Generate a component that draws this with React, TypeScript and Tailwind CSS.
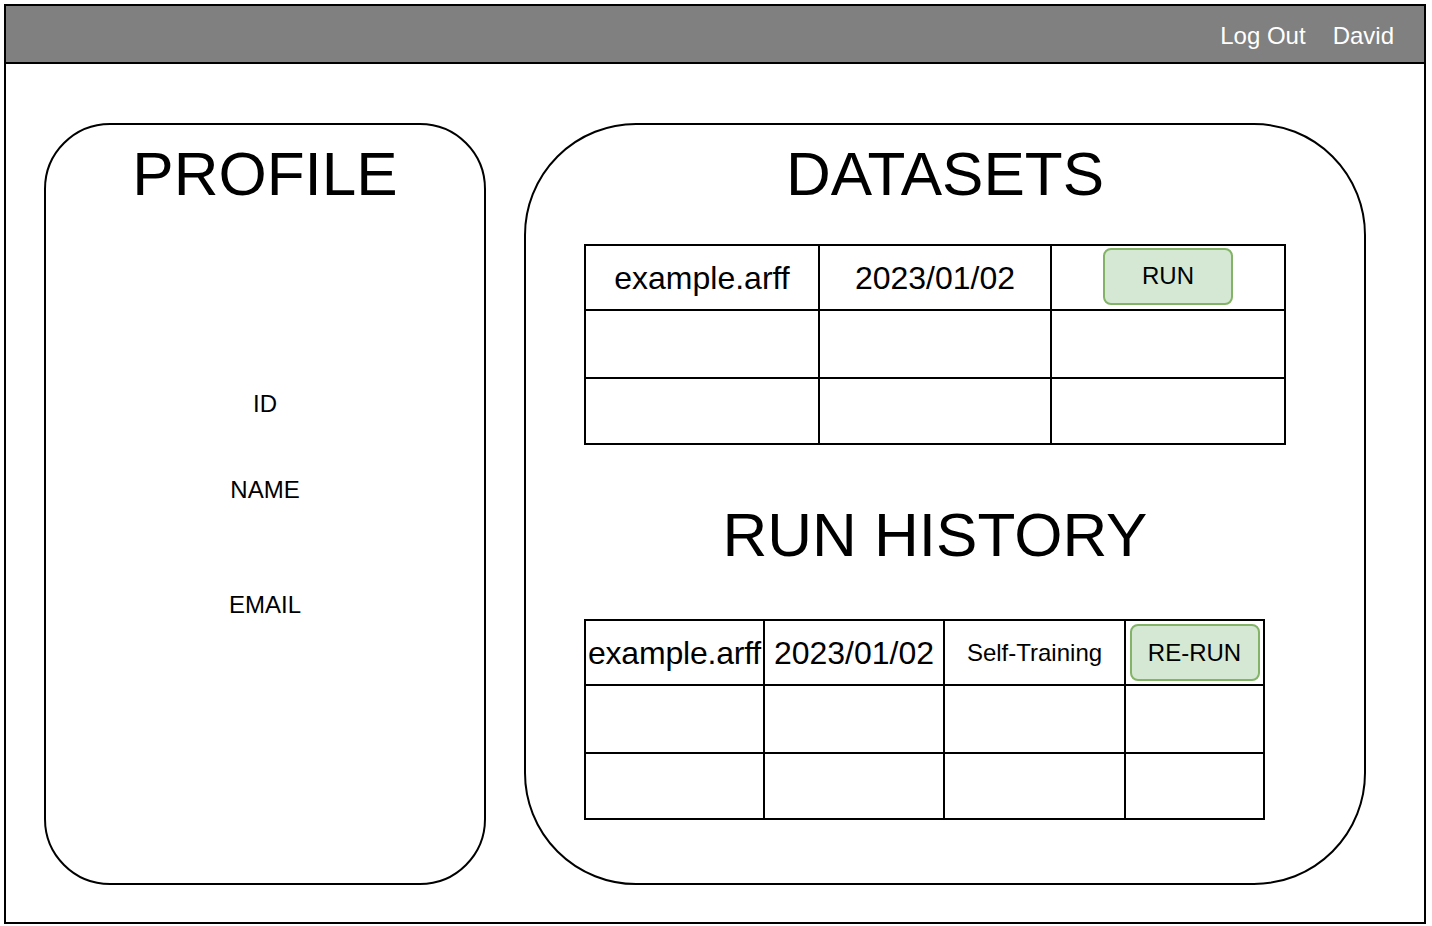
import React from 'react';

// Wireframe: profile panel on the left, datasets + run history on the right
function GreenButton({ label }: { label: string }) {
  return (
    <div className="flex h-[57px] w-[130px] items-center justify-center rounded-[8px] border-2 border-[#82b366] bg-[#d5e8d4] text-[24px] text-black">
      {label}
    </div>
  );
}

function Cell({ children, className = '' }: { children?: React.ReactNode; className?: string }) {
  return (
    <div className={`flex items-center justify-center overflow-hidden bg-white whitespace-nowrap ${className}`}>
      {children}
    </div>
  );
}

function DatasetTable() {
  return (
    <div className="grid w-fit grid-cols-[232px_230px_232px] grid-rows-[63px_66px_64px] gap-[2px] bg-black p-[2px]">
      <Cell className="text-[32px]">example.arff</Cell>
      <Cell className="text-[32px]">2023/01/02</Cell>
      <Cell className="pb-[3px]">
        <GreenButton label="RUN" />
      </Cell>
      {Array.from({ length: 6 }).map((_, i) => (
        <Cell key={i} />
      ))}
    </div>
  );
}

function HistoryTable() {
  return (
    <div className="grid w-fit grid-cols-[177px_178px_179px_137px] grid-rows-[63px_66px_64px] gap-[2px] bg-black p-[2px]">
      <Cell className="text-[32px] tracking-[-0.2px]">example.arff</Cell>
      <Cell className="text-[32px]">2023/01/02</Cell>
      <Cell className="text-[24px]">Self-Training</Cell>
      <Cell>
        <GreenButton label="RE-RUN" />
      </Cell>
      {Array.from({ length: 8 }).map((_, i) => (
        <Cell key={i} />
      ))}
    </div>
  );
}

export default function App() {
  return (
    <div className="min-h-screen bg-white p-[4px] font-['Liberation_Sans',Arial,Helvetica,sans-serif] text-black">
      <div className="flex h-[920px] w-[1422px] flex-col border-2 border-black">
        <header className="flex h-[58px] shrink-0 items-center justify-end gap-[27px] border-b-2 border-black bg-[#808080] pr-[30px] pt-[3px] text-[24px] text-white">
          <span>Log Out</span>
          <span>David</span>
        </header>

        <main className="flex gap-[38px] pl-[38px] pt-[59px]">
          <section className="flex h-[762px] w-[442px] flex-col items-center rounded-[66px] border-2 border-black pt-[19px]">
            <h1 className="text-[62px] leading-[60px]">PROFILE</h1>
            <div className="mt-[188px] text-[24px] leading-[24px]">ID</div>
            <div className="mt-[62px] text-[24px] leading-[24px]">NAME</div>
            <div className="mt-[91px] text-[24px] leading-[24px]">EMAIL</div>
          </section>

          <section className="flex h-[762px] w-[842px] flex-col rounded-[112px] border-2 border-black pt-[19px]">
            <h1 className="w-full text-center text-[62px] leading-[60px]">DATASETS</h1>
            <div className="ml-[58px] mt-[40px] flex w-[702px] flex-col items-start">
              <DatasetTable />
              <h2 className="mt-[60px] w-full text-center text-[62px] leading-[60px]">RUN HISTORY</h2>
              <div className="mt-[54px]">
                <HistoryTable />
              </div>
            </div>
          </section>
        </main>
      </div>
    </div>
  );
}
